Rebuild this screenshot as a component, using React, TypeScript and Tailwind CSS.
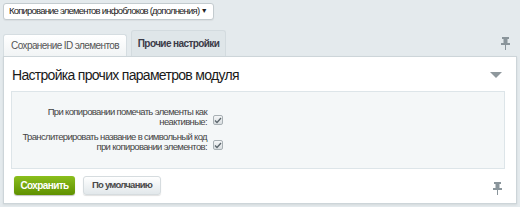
function Pin() {
  return (
    <svg width="9" height="13" viewBox="0 0 9 13">
      <rect x="1" y="0" width="7" height="2" fill="#8a959b" />
      <rect x="2.5" y="2" width="4" height="4" fill="#8a959b" />
      <rect x="0" y="6" width="9" height="2" fill="#8a959b" />
      <rect x="4" y="8" width="1" height="5" fill="#8a959b" />
    </svg>
  );
}

function Check() {
  return (
    <span className="flex h-[10px] w-[10px] shrink-0 items-center justify-center rounded-[2px] border border-[#a8b0b4] bg-gradient-to-b from-[#f4f6f7] to-[#d9dee1]">
      <svg width="8" height="7" viewBox="0 0 8 7">
        <path d="M1 3.5 L3 5.5 L7 1" fill="none" stroke="#5b666c" strokeWidth="1.3" />
      </svg>
    </span>
  );
}

const rows = [
  ["При копировании помечать элементы как", "неактивные:"],
  ["Транслитерировать название в символьный код", "при копировании элементов:"],
];

export default function App() {
  return (
    <div
      className="h-[207px] w-[520px] overflow-hidden whitespace-nowrap bg-[#e4eaed] pt-[3px] pl-[3px] pr-[3px] text-[#333]"
      style={{ fontFamily: '"Liberation Sans", Arial, sans-serif' }}
    >
      <div className="flex h-[17px] w-[211px] items-center justify-between rounded-[3px] border border-[#c3cbcf] bg-white pl-[5px] pr-[6px] text-[9.5px] tracking-[-0.8px] text-[#222] shadow-[0_1px_1px_rgba(0,0,0,0.05)]">
        <span>Копирование элементов инфоблоков (дополнения)</span>
        <span className="text-[7px]">▼</span>
      </div>

      <div className="mt-[9px] flex h-[27px] items-end">
        <div className="flex h-[22px] w-[124px] items-center justify-center rounded-t-[3px] border border-b-0 border-[#d5dde1] bg-gradient-to-b from-white to-[#f1f4f5] text-[10px] tracking-[-0.6px] text-[#555]">
          Сохранение ID элементов
        </div>
        <div className="ml-[4px] flex h-[26px] w-[95px] items-center justify-center rounded-t-[3px] border border-b-0 border-[#d3dbdf] bg-[#dfe6e9] text-[10px] font-bold tracking-[-0.6px] text-[#3c3b48]">
          Прочие настройки
        </div>
        <div className="flex flex-1 justify-end pr-[7px] pb-[6px]">
          <Pin />
        </div>
      </div>

      <div className="h-[148px] w-[514px] border border-[#cdd5d9] bg-white shadow-[0_1px_2px_rgba(0,0,0,0.08)]">
        <div className="flex h-[34px] items-center justify-between pl-[8px] pr-[14px] pt-[2px]">
          <span className="text-[14px] tracking-[-0.7px] text-[#1a1a1a]">Настройка прочих параметров модуля</span>
          <svg width="12" height="7" viewBox="0 0 12 7">
            <path d="M0 0 H12 L6 6 Z" fill="#8f989d" />
          </svg>
        </div>
        <div className="ml-[7px] flex h-[78px] w-[494px] flex-col gap-[5px] border border-[#dde5e9] bg-[#f4f7f8] pt-[15px]">
          {rows.map((r, i) => (
            <div key={i} className="flex items-center">
              <div className="w-[195px] text-right text-[9.5px] leading-[10px] tracking-[-0.65px] text-[#444]">
                <div>{r[0]}</div>
                <div>{r[1]}</div>
              </div>
              <div className="ml-[6px] mt-[6px]">
                <Check />
              </div>
            </div>
          ))}
        </div>
        <div className="flex items-center pl-[10px] pr-[14px] pt-[7px]">
          <button className="flex h-[19px] w-[61px] items-center justify-center rounded-[3px] bg-gradient-to-b from-[#8bbf1c] to-[#5f9000] text-[10px] font-bold tracking-[-0.6px] text-white shadow-[0_1px_1px_rgba(0,0,0,0.25)]">
            Сохранить
          </button>
          <button className="ml-[8px] flex h-[19px] w-[78px] items-center justify-center rounded-[3px] border border-[#d6dcdf] bg-gradient-to-b from-white to-[#e2e8eb] text-[9.5px] font-bold tracking-[-0.75px] text-[#4a4a4a] shadow-[0_1px_1px_rgba(0,0,0,0.12)]">
            По умолчанию
          </button>
          <div className="flex flex-1 justify-end pt-[6px]">
            <Pin />
          </div>
        </div>
      </div>
    </div>
  );
}
